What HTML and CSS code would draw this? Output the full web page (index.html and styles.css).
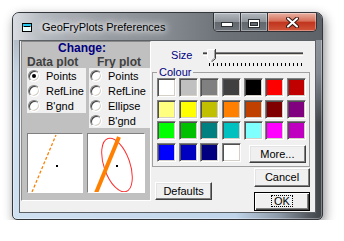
FILE: index.html
```html
<!DOCTYPE html>
<html>
<head>
<meta charset="utf-8">
<link rel="stylesheet" href="styles.css">
</head>
<body>
<div class="window">
  <div class="titlebar">
    <svg class="app-icon" width="10" height="9" viewBox="0 0 10 9"><rect x="0.5" y="0.5" width="9" height="8" fill="#eaffff" stroke="#000"/><rect x="1" y="1" width="8" height="2" fill="#22c8f0"/><path d="M1.5 3.5h7" stroke="#000"/></svg>
    <span class="title">GeoFryPlots Preferences</span>
    <div class="caption-buttons">
      <div class="cbtn cmin"><svg width="12" height="5" viewBox="0 0 12 5"><rect x="0.5" y="0.5" width="11" height="4" fill="#fff" stroke="#2b2e33"/></svg></div>
      <div class="cbtn cmax"><svg width="12" height="9" viewBox="0 0 12 9"><rect x="0.5" y="0.5" width="11" height="8" fill="none" stroke="#2b2e33"/><rect x="1.5" y="1.5" width="9" height="6" fill="none" stroke="#fff"/><path d="M2 2.5h8" stroke="#fff"/><rect x="2.5" y="3.5" width="7" height="3" fill="none" stroke="#2b2e33"/></svg></div>
      <div class="cbtn cclose"><svg width="13" height="11" viewBox="0 0 13 11"><path d="M2 1.5L11 9.5M11 1.5L2 9.5" stroke="#3a1a14" stroke-width="4" stroke-linecap="round"/><path d="M2 1.5L11 9.5M11 1.5L2 9.5" stroke="#fff" stroke-width="2" stroke-linecap="round"/></svg></div>
    </div>
  </div>
  <div class="client">
    <div class="left-panel">
      <div class="change">Change:</div>
      <div class="plot-grid">
        <div class="col-head">Data plot</div>
        <div class="col-head fry-head">Fry plot</div>
        <div class="radio-group">
          <div class="radio-item"><span class="radio checked"></span>Points</div>
          <div class="radio-item"><span class="radio"></span>RefLine</div>
          <div class="radio-item"><span class="radio"></span>B'gnd</div>
        </div>
        <div class="radio-group">
          <div class="radio-item"><span class="radio"></span>Points</div>
          <div class="radio-item"><span class="radio"></span>RefLine</div>
          <div class="radio-item"><span class="radio"></span>Ellipse</div>
          <div class="radio-item"><span class="radio"></span>B'gnd</div>
        </div>
      </div>
      <div class="previews">
        <div class="preview p1">
          <svg width="54" height="58" viewBox="0 0 54 58"><path d="M4 58L28 1" stroke="#ff8000" stroke-width="1.3" stroke-dasharray="3 2"/><rect x="28" y="31" width="2" height="2" fill="#000"/></svg>
        </div>
        <div class="preview p2">
          <svg width="56" height="58" viewBox="0 0 56 58"><ellipse cx="29" cy="31" rx="13" ry="28" fill="none" stroke="#ff3030" stroke-width="1" transform="rotate(-19 29 31)"/><path d="M8 59L31 3" stroke="#ff8000" stroke-width="4"/><rect x="28" y="31" width="2" height="2" fill="#000"/></svg>
        </div>
      </div>
    </div>
    <div class="right-panel">
      <div class="size-row">
        <span class="size-label">Size</span>
        <div class="slider">
          <div class="track"></div>
          <div class="ticks"></div>
          <svg class="thumb" width="9" height="13" viewBox="0 0 9 13"><path d="M0.5 0.5H8.5V9.5L4.5 12.5L0.5 9.5Z" fill="#f0f0f0"/><path d="M0.5 9.5V0.5H7.5" stroke="#fff" fill="none"/><path d="M8.5 0V9.7L4.5 12.8" stroke="#404040" fill="none"/><path d="M7.5 1V9.2L4.5 11.5" stroke="#a0a0a0" fill="none"/><path d="M0.5 9.5L3.5 12" stroke="#fff" fill="none"/></svg>
        </div>
      </div>
      <fieldset class="colour-box">
        <legend>Colour</legend>
        <div class="swatches">
          <span class="sw s-ffffff"></span><span class="sw s-c0c0c0"></span><span class="sw s-808080"></span><span class="sw s-404040"></span><span class="sw s-000000"></span><span class="sw s-ff0000"></span><span class="sw s-c00000"></span>
          <span class="sw s-ffff80"></span><span class="sw s-ffff00"></span><span class="sw s-c0c000"></span><span class="sw s-ff8000"></span><span class="sw s-c04000"></span><span class="sw s-800000"></span><span class="sw s-800080"></span>
          <span class="sw s-00ff00"></span><span class="sw s-00c000"></span><span class="sw s-008080"></span><span class="sw s-00c0c0"></span><span class="sw s-80ffff"></span><span class="sw s-ff00ff"></span><span class="sw s-c000c0"></span>
          <span class="sw s-0000ff"></span><span class="sw s-0000c0"></span><span class="sw s-000080"></span><span class="sw s-ffffff"></span>
          <button class="btn more">More...</button>
        </div>
      </fieldset>
      <div class="button-row">
        <button class="btn defaults">Defaults</button>
        <div class="btn-stack">
          <button class="btn">Cancel</button>
          <button class="btn ok"><span class="focus">OK</span></button>
        </div>
      </div>
    </div>
  </div>
</div>
</body>
</html>
```

FILE: styles.css
```css
* { box-sizing: border-box; }
html, body { margin: 0; padding: 0; background: #fff; }
body {
  font-family: "Liberation Sans", Arial, sans-serif;
  font-size: 11px;
  color: #000;
}

.window {
  margin: 12px 0 0 12px;
  width: 311px;
  height: 208px;
  border: 1px solid #33373c;
  border-radius: 7px 7px 5px 5px;
  background:
    linear-gradient(180deg, rgba(160,166,172,0.9) 0, rgba(190,200,212,0.5) 60px, rgba(200,218,236,0) 110px),
    linear-gradient(90deg, #cfe0f1 0%, #c0d5ea 72%, #8d9aa8 86%, #52575d 96%, #3e4247 100%);
  box-shadow: 2px 4px 11px rgba(0,0,0,0.45), inset 0 0 0 1px rgba(255,255,255,0.35);
  display: flex;
  flex-direction: column;
  padding: 0 6px 6px 6px;
  overflow: hidden;
}

.titlebar {
  margin: 0 -6px;
  height: 27px;
  flex: none;
  display: flex;
  align-items: center;
  padding: 0 5px 0 9px;
  background: linear-gradient(90deg, #d9dde2 0%, #b3b8be 10%, #979ca2 30%, #848a90 50%, #6d7278 68%, #5d6268 100%);
}
.app-icon { flex: none; margin-top: 1px; }
.title {
  margin-left: 10px;
  font-size: 11px;
  color: #000;
  text-shadow: 0 0 5px #fff, 0 0 9px #fff, 0 0 13px rgba(255,255,255,0.9);
}
.caption-buttons {
  margin-left: auto;
  align-self: flex-start;
  display: flex;
  height: 19px;
  border: 1px solid #2f3237;
  border-top: 0;
  border-radius: 0 0 5px 5px;
  overflow: hidden;
}
.cbtn {
  height: 18px;
  display: flex;
  align-items: center;
  justify-content: center;
  box-shadow: inset 0 0 0 1px rgba(255,255,255,0.35);
}
.cmin {
  width: 27px;
  background: linear-gradient(180deg, #b4b9bf 0%, #8e949a 48%, #62676d 52%, #6f757b 100%);
  border-right: 1px solid #2f3237;
  align-items: flex-end;
  padding-bottom: 4px;
}
.cmax {
  width: 27px;
  background: linear-gradient(180deg, #b4b9bf 0%, #8e949a 48%, #62676d 52%, #6f757b 100%);
  border-right: 1px solid #2f3237;
}
.cmax svg { margin-top: 2px; }
.cclose {
  width: 48px;
  background: linear-gradient(180deg, #e9b2a4 0%, #d66f58 45%, #c1341d 52%, #d0553a 100%);
}

.client {
  flex: 1;
  display: flex;
  border: 1px solid #5c6166;
  background: #f0f0f0;
}

.left-panel {
  width: 132px;
  height: 160px;
  margin-left: 1px;
  background: #c0c0c0;
  border: 1px solid;
  border-color: #8a8a8a #fff #fff #8a8a8a;
  display: flex;
  flex-direction: column;
}
.change {
  padding-left: 36px;
  font-size: 12px;
  font-weight: bold;
  line-height: 13px;
  color: #000080;
}
.plot-grid {
  display: grid;
  grid-template-columns: 59px 61px;
  column-gap: 3px;
  padding-left: 5px;
  align-items: start;
}
.col-head {
  font-size: 12px;
  font-weight: bold;
  line-height: 12px;
  padding-top: 1px;
  color: #404040;
}
.fry-head { padding-left: 8px; }
.radio-group {
  background: #f0f0f0;
  padding-left: 1px;
}
.radio-item {
  height: 15px;
  display: flex;
  align-items: center;
  gap: 6px;
  font-size: 11px;
}
.radio {
  width: 12px;
  height: 12px;
  flex: none;
  border-radius: 50%;
  background: #fff;
  border: 1px solid;
  border-color: #808080 #fff #fff #808080;
  box-shadow: inset 1px 1px 0 #404040, inset -1px -1px 0 #d4d0c8;
  display: flex;
  align-items: center;
  justify-content: center;
}
.radio.checked::after {
  content: "";
  width: 4px;
  height: 4px;
  border-radius: 50%;
  background: #000;
}
.previews {
  display: flex;
  gap: 4px;
  padding-left: 5px;
  margin-top: 5px;
}
.preview {
  height: 60px;
  background: #fff;
  border: 1px solid;
  border-color: #808080 #fff #fff #808080;
}
.preview svg { display: block; }
.p1 { width: 56px; }
.p2 { width: 58px; }

.right-panel {
  flex: 1;
  display: flex;
  flex-direction: column;
}
.size-row {
  display: flex;
  align-items: flex-start;
  padding: 8px 0 0 20px;
  height: 25px;
}
.size-label {
  width: 32px;
  font-size: 11px;
  line-height: 12px;
  color: #000080;
}
.slider {
  position: relative;
  width: 100px;
  height: 17px;
  display: flex;
  flex-direction: column;
}
.track {
  margin-top: 3px;
  height: 4px;
  border-top: 1px solid #808080;
  border-bottom: 1px solid #fff;
  background: linear-gradient(180deg, #404040 0 1px, #d4d0c8 1px);
}
.ticks {
  margin: 7px 0 0 6px;
  width: 93px;
  height: 3px;
  background: repeating-linear-gradient(90deg, #000 0 1px, transparent 1px 4px);
}
.thumb {
  position: absolute;
  left: 4px;
  top: 0;
}

.colour-box {
  margin: 0 5px 0 1px;
  padding: 0 3px 4px 4px;
  border: 1px solid #a0a0a0;
  min-width: 0;
}
.colour-box legend {
  padding: 0 2px;
  font-size: 11px;
  line-height: 12px;
  color: #000080;
}
.swatches {
  display: grid;
  grid-template-columns: repeat(7, 19px);
  grid-auto-rows: 19px;
  column-gap: 2.67px;
  row-gap: 2.67px;
}
.sw {
  display: block;
  border: 1px solid;
  border-color: #808080 #fff #fff #808080;
  box-shadow: inset 1px 1px 0 #505050, inset -1px -1px 0 #d4d0c8;
}
.s-ffffff { background: #ffffff; }
.s-c0c0c0 { background: #c0c0c0; }
.s-808080 { background: #808080; }
.s-404040 { background: #404040; }
.s-000000 { background: #000000; }
.s-ff0000 { background: #ff0000; }
.s-c00000 { background: #c00000; }
.s-ffff80 { background: #ffff80; }
.s-ffff00 { background: #ffff00; }
.s-c0c000 { background: #c0c000; }
.s-ff8000 { background: #ff8000; }
.s-c04000 { background: #c04000; }
.s-800000 { background: #800000; }
.s-800080 { background: #800080; }
.s-00ff00 { background: #00ff00; }
.s-00c000 { background: #00c000; }
.s-008080 { background: #008080; }
.s-00c0c0 { background: #00c0c0; }
.s-80ffff { background: #80ffff; }
.s-ff00ff { background: #ff00ff; }
.s-c000c0 { background: #c000c0; }
.s-0000ff { background: #0000ff; }
.s-0000c0 { background: #0000c0; }
.s-000080 { background: #000080; }

.btn {
  font: inherit;
  font-size: 11px;
  color: #000;
  padding: 0;
  margin: 0;
  background: #f0f0f0;
  border: 1px solid;
  border-color: #fff #404040 #404040 #fff;
  box-shadow: inset -1px -1px 0 #808080, inset 1px 1px 0 #e3e3e3;
  display: flex;
  align-items: center;
  justify-content: center;
}
.more {
  grid-column: 5 / span 3;
  margin: 2px 0 0 5px;
  height: 18px;
}
.button-row {
  display: flex;
  align-items: flex-start;
  margin-top: 1px;
}
.defaults {
  width: 57px;
  height: 18px;
  margin: 14px 0 0 4px;
}
.btn-stack {
  margin-left: auto;
  margin-right: 5px;
  display: flex;
  flex-direction: column;
  gap: 5px;
}
.btn-stack .btn {
  width: 56px;
  height: 19px;
}
.ok {
  border: 1px solid #000;
  box-shadow: inset 1px 1px 0 #fff, inset -1px -1px 0 #404040, inset -2px -2px 0 #808080;
}
.focus {
  border: 1px dotted #000;
  padding: 0 2px;
  line-height: 10px;
}
```
